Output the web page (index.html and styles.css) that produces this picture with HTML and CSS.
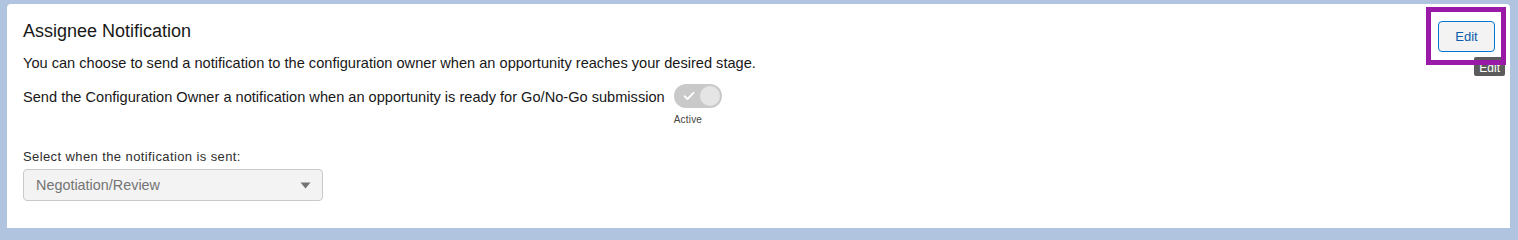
FILE: index.html
```html
<!DOCTYPE html>
<html>
<head>
<meta charset="utf-8">
<link rel="stylesheet" href="styles.css">
</head>
<body>
<div class="card">
  <div class="header">
    <h2 class="title">Assignee Notification</h2>
    <div class="edit-wrap">
      <div class="highlight">
        <button class="edit-btn">Edit</button>
      </div>
      <div class="tooltip">Edit</div>
    </div>
  </div>
  <p class="desc">You can choose to send a notification to the configuration owner when an opportunity reaches your desired stage.</p>
  <div class="toggle-row">
    <span class="toggle-label">Send the Configuration Owner a notification when an opportunity is ready for Go/No-Go submission</span>
    <div class="toggle-col">
      <span class="toggle">
        <svg class="check" width="12" height="10" viewBox="0 0 12 10"><path d="M1.5 5.2 L4.5 8 L10.5 1.8" fill="none" stroke="#fff" stroke-width="1.8" stroke-linecap="round" stroke-linejoin="round"/></svg>
        <span class="knob"></span>
      </span>
      <span class="toggle-text">Active</span>
    </div>
  </div>
  <div class="field">
    <label class="field-label">Select when the notification is sent:</label>
    <div class="select">
      <span>Negotiation/Review</span>
      <svg width="11" height="7" viewBox="0 0 11 7"><path d="M0.5 0.5 H10.5 L5.5 6.5 Z" fill="#747474"/></svg>
    </div>
  </div>
</div>
</body>
</html>
```

FILE: styles.css
```css
html, body {
  margin: 0;
  padding: 0;
  height: 228px;
  overflow: hidden;
}
body {
  background: #b0c4df;
  font-family: "Liberation Sans", Arial, sans-serif;
  color: #181818;
  padding: 4px 8px 0 7px;
  box-sizing: border-box;
}
.card {
  background: #fff;
  border-radius: 4px 4px 0 0;
  height: 224px;
  padding: 0 16px;
  box-sizing: border-box;
  overflow: hidden;
}
.header {
  display: flex;
  justify-content: space-between;
  align-items: flex-start;
  height: 44px;
}
.title {
  margin: 0;
  padding-top: 16px;
  font-size: 18px;
  font-weight: 400;
  line-height: 22px;
}
.edit-wrap {
  position: relative;
  margin-right: -12px;
  margin-top: 3px;
}
.highlight {
  border: 5px solid #9a1aa8;
  padding: 9px 6px 8px 7px;
  width: 57px;
  position: relative;
  z-index: 2;
}
.edit-btn {
  display: block;
  width: 57px;
  height: 31px;
  border: 1px solid #0176d3;
  border-radius: 4px;
  background: #f3f3f3;
  color: #0b5cab;
  font-family: inherit;
  font-size: 13px;
  padding: 0;
}
.tooltip {
  position: absolute;
  right: 1px;
  top: 50px;
  height: 19px;
  line-height: 22px;
  background: #5c5c5c;
  color: #fff;
  font-size: 12px;
  padding: 0 5px;
  border-radius: 2px;
  z-index: 1;
}
.desc {
  margin: 5px 0 0 0;
  font-size: 14.6px;
  line-height: 20px;
}
.toggle-row {
  display: flex;
  align-items: flex-start;
  margin-top: 14px;
}
.toggle-label {
  font-size: 14.6px;
  line-height: 20px;
}
.toggle-col {
  display: flex;
  flex-direction: column;
  align-items: flex-start;
  margin-left: 9px;
  margin-top: -3px;
}
.toggle {
  display: flex;
  align-items: center;
  justify-content: space-between;
  width: 48px;
  height: 24px;
  background: #c9c9c9;
  border-radius: 12px;
  box-sizing: border-box;
  padding: 0 2px 0 9px;
}
.knob {
  width: 20px;
  height: 20px;
  border-radius: 50%;
  background: #e5e5e5;
}
.toggle-text {
  font-size: 10px;
  letter-spacing: 0.2px;
  color: #444;
  margin-top: 6px;
}
.field {
  margin-top: 24px;
}
.field-label {
  display: block;
  font-size: 13px;
  letter-spacing: 0.4px;
  color: #2e2e2e;
  line-height: 16px;
}
.select {
  margin-top: 4px;
  width: 300px;
  height: 32px;
  box-sizing: border-box;
  border: 1px solid #c9c9c9;
  border-radius: 4px;
  background: #f3f3f3;
  color: #747474;
  font-size: 14.4px;
  display: flex;
  align-items: center;
  justify-content: space-between;
  padding: 0 11px 0 12px;
}
```
